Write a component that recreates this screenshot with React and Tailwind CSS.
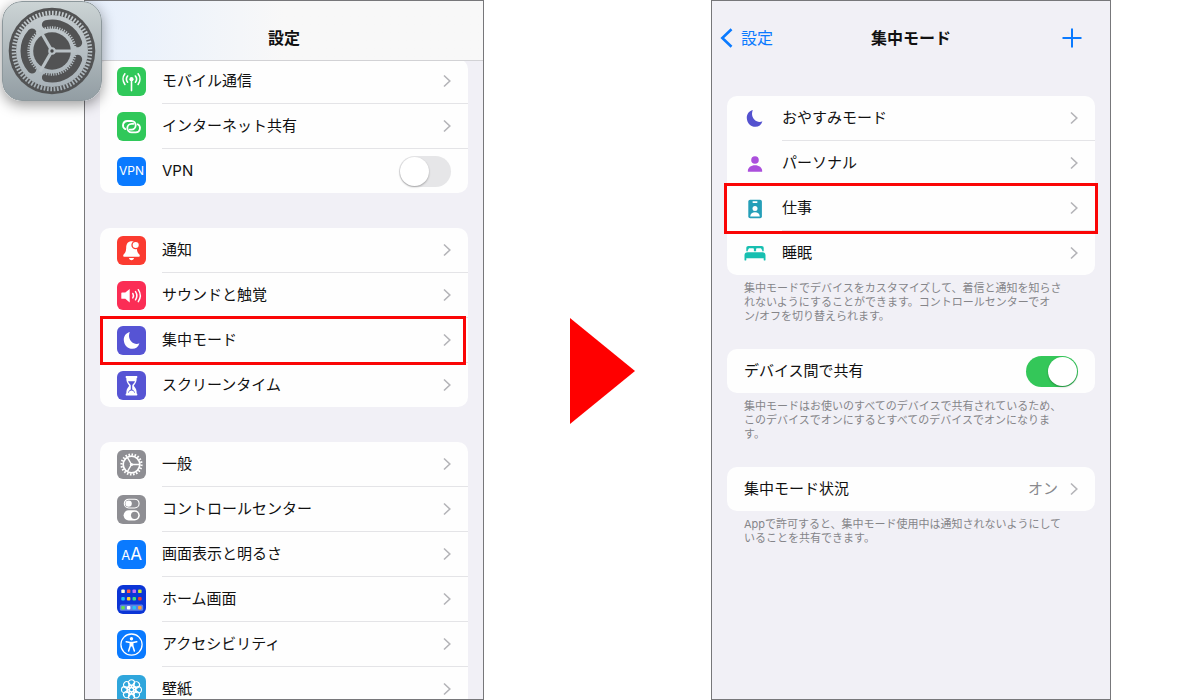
import React from "react";

const MOON =
  "M12.8 6C8.8 7 6.6 10.4 6.8 14.2C7.1 19.2 10.8 22.8 15.5 22.8C18.7 22.8 21.3 20.8 22.4 17.2C20.8 18.2 18.6 18.2 16.8 17.3C12.6 15.3 10.9 10.6 12.8 6Z";

function Chevron() {
  return (
    <svg viewBox="0 0 8 14" className="h-3.5 w-2 shrink-0" fill="none" stroke="#b4b4b8" strokeWidth="1.6" aria-hidden="true">
      <path d="M1 1.5 6.8 7 1 12.5" />
    </svg>
  );
}

function Tile({ className, children }) {
  return (
    <span className={`flex size-[29px] shrink-0 items-center justify-center self-center overflow-hidden rounded-md text-white ${className}`}>
      {children}
    </span>
  );
}

function Glyph({ children, ...rest }) {
  return (
    <svg viewBox="0 0 29 29" className="size-full" fill="none" aria-hidden="true" {...rest}>
      {children}
    </svg>
  );
}

function CellularIcon() {
  return (
    <Tile className="bg-[#30c85a]">
      <Glyph stroke="currentColor" strokeWidth="1.6" strokeLinecap="round">
        <path d="M7.9 6.8A8.6 8.6 0 0 0 7.9 17.4M10.6 9A5 5 0 0 0 10.6 15.2M18.4 9A5 5 0 0 1 18.4 15.2M21.1 6.8A8.6 8.6 0 0 1 21.1 17.4M14.5 13V23.6" />
        <circle cx="14.5" cy="12.2" r="2.1" fill="currentColor" stroke="none" />
      </Glyph>
    </Tile>
  );
}

function HotspotIcon() {
  const link = "M8.3 17.1A4.3 4.3 0 0 1 10.2 9H14.4A4.3 4.3 0 0 1 14.4 17.6H12.6";
  return (
    <Tile className="bg-[#30c85a]">
      <Glyph stroke="currentColor" strokeWidth="1.8" strokeLinecap="round">
        <path d={link} />
        <path d={link} transform="rotate(180 14.5 14.7)" />
      </Glyph>
    </Tile>
  );
}

function BellIcon() {
  return (
    <Tile className="bg-[#fb3b30]">
      <Glyph fill="currentColor">
        <path d="M14 5.2C10.6 5.6 9.3 8.4 9.2 11.4C9.1 15.4 8.4 16.4 6.8 18.2C5.8 19.4 6 20.8 7.6 20.8H21.4C23 20.8 23.2 19.4 22.2 18.2C20.6 16.4 20 15.4 19.8 11.4C19.6 8 18.2 5.5 15.4 5.2C15 5.1 14.4 5.1 14 5.2ZM12 22H17C16.8 23.4 15.8 24.2 14.5 24.2C13.2 24.2 12.2 23.4 12 22Z" />
        <circle cx="18.7" cy="9" r="3.7" stroke="#fb3b30" strokeWidth="1.3" />
      </Glyph>
    </Tile>
  );
}

function SoundIcon() {
  return (
    <Tile className="bg-[#fb2d55]">
      <Glyph stroke="currentColor" strokeWidth="1.5" strokeLinecap="round">
        <path d="M5 11.6H8.3L12.7 8V21.4L8.3 17.8H5C4.5 17.8 4.3 17.6 4.3 17.2V12.2C4.3 11.8 4.5 11.6 5 11.6Z" fill="currentColor" stroke="none" />
        <path d="M15.8 12.5Q17.2 14.7 15.8 16.9M18.5 10.6Q21.2 14.7 18.5 18.8M21.3 8.7Q25.3 14.7 21.3 20.7" />
      </Glyph>
    </Tile>
  );
}

function FocusIcon() {
  return (
    <Tile className="bg-[#5654d4]">
      <Glyph fill="currentColor">
        <path d={MOON} />
      </Glyph>
    </Tile>
  );
}

function HourglassIcon() {
  return (
    <Tile className="bg-[#5654d4]">
      <Glyph fill="currentColor">
        <path d="M9.3 5H19.7C20.6 5 20.6 7 19.7 7.1C19.7 10.6 19 12 16.8 14.8C19 17.6 19.7 19 19.7 22.5C20.6 22.6 20.6 24.6 19.7 24.6H9.3C8.4 24.6 8.4 22.6 9.3 22.5C9.3 19 10 17.6 12.2 14.8C10 12 9.3 10.6 9.3 7.1C8.4 7 8.4 5 9.3 5Z" />
        <path d="M11 10.3H18C17.3 12 16 13 15.2 14.4V18.6C16.4 19.2 17.6 20.3 18.1 22H10.9C11.4 20.3 12.6 19.2 13.8 18.6V14.4C13 13 11.7 12 11 10.3Z" fill="#5654d4" />
        <path d="M11.4 21.9C12 20.4 13.2 19.7 14.5 19.6C15.8 19.7 17 20.4 17.6 21.9Z" />
      </Glyph>
    </Tile>
  );
}

function GeneralIcon() {
  return (
    <Tile className="bg-[#8e8e93]">
      <Glyph stroke="currentColor">
        <circle cx="14.5" cy="14.5" r="10" strokeWidth="2.2" pathLength="40" strokeDasharray="1 1" />
        <circle cx="14.5" cy="14.5" r="8.3" strokeWidth="1.7" />
        <path d="M14.5 14.5H22.5M14.5 14.5L10.5 7.6M14.5 14.5L10.5 21.4" strokeWidth="1.4" />
        <circle cx="14.5" cy="14.5" r="1.6" fill="currentColor" stroke="none" />
      </Glyph>
    </Tile>
  );
}

function ControlCenterIcon() {
  return (
    <Tile className="bg-[#8e8e93]">
      <Glyph>
        <rect x="7.3" y="4.2" width="14.8" height="8.8" rx="4.4" stroke="currentColor" strokeWidth="1.1" />
        <circle cx="11.6" cy="8.6" r="3.2" fill="currentColor" />
        <rect x="6.6" y="15.2" width="16.2" height="10.2" rx="5.1" fill="currentColor" />
        <circle cx="17.6" cy="20.3" r="3.6" fill="#8e8e93" />
      </Glyph>
    </Tile>
  );
}

const HOME_DOTS = [
  ["#ffffd8", "#ff5a4a", "#c86cf5", "#c9ea2e"],
  ["#22c3f3", "#ffd02e", "#3fe07c", "#f5392f"],
  ["#62e052", "#ffffff", "#25c5f5", "#ff9f2e"],
];

function HomeIcon() {
  return (
    <Tile className="bg-[#0b35d6]">
      <Glyph>
        <rect x="2.8" y="19.4" width="23.4" height="6.4" rx="1.6" fill="#5f7fe6" />
        {HOME_DOTS.map((row, r) =>
          row.map((color, c) => (
            <rect key={color} x={4.3 + c * 5.6} y={[4.6, 12, 20.9][r]} width="3.5" height="3.5" rx="0.9" fill={color} />
          ))
        )}
      </Glyph>
    </Tile>
  );
}

function AccessibilityIcon() {
  return (
    <Tile className="bg-[#0a7aff]">
      <Glyph stroke="currentColor" strokeLinecap="round" strokeLinejoin="round">
        <circle cx="14.5" cy="14.6" r="10.6" strokeWidth="1.3" />
        <circle cx="14.5" cy="8.8" r="1.7" fill="currentColor" stroke="none" />
        <path d="M9.2 11.8L13 12.6H16L19.8 11.8M13.3 12.8L13.2 16L11.6 21M15.7 12.8L15.8 16L17.4 21" strokeWidth="1.5" />
        <path d="M13 12.4H16V16.6H13Z" fill="currentColor" stroke="none" />
      </Glyph>
    </Tile>
  );
}

function WallpaperIcon() {
  const petals = [0, 45, 90, 135, 180, 225, 270, 315];
  return (
    <Tile className="bg-[#2fa6dc]">
      <Glyph stroke="currentColor" strokeWidth="1.1">
        {petals.map((angle) => (
          <circle key={angle} cx="14.5" cy="7.8" r="3.1" transform={`rotate(${angle} 14.5 14.7)`} />
        ))}
        {petals.map((angle) => (
          <circle key={`inner-${angle}`} cx="14.5" cy="11.2" r="1.6" transform={`rotate(${angle + 22} 14.5 14.7)`} />
        ))}
        <circle cx="14.5" cy="14.7" r="2.2" />
      </Glyph>
    </Tile>
  );
}

function VpnIcon() {
  return (
    <Tile className="bg-[#0a7aff]">
      <span className="text-[12px] leading-none">VPN</span>
    </Tile>
  );
}

function DisplayIcon() {
  return (
    <Tile className="bg-[#0a7aff]">
      <span className="text-[13px] leading-none">
        A<span className="text-[17px]">A</span>
      </span>
    </Tile>
  );
}

function Bare({ children }) {
  return (
    <svg viewBox="1 0 22 24" className="h-6 w-[22px] shrink-0 self-center" aria-hidden="true">
      {children}
    </svg>
  );
}

const MoonMark = () => (
  <Bare>
    <path d={MOON} transform="translate(-3 -3)" fill="#5452cf" />
  </Bare>
);

const PersonMark = () => (
  <Bare>
    <g fill="#ab4fdc">
      <circle cx="12" cy="8" r="3.8" />
      <path d="M4.8 19.2C4.8 15.5 8 13.3 12 13.3S19.2 15.5 19.2 19.2C19.2 19.6 19 19.8 18.6 19.8H5.4C5 19.8 4.8 19.6 4.8 19.2Z" />
    </g>
  </Bare>
);

const BadgeMark = () => (
  <Bare>
    <rect x="5.3" y="2.8" width="13.6" height="18.4" rx="1.8" fill="#259fb8" />
    <rect x="9.4" y="4.3" width="5.2" height="1.6" rx="0.8" fill="#fff" />
    <circle cx="12" cy="11.6" r="2.5" fill="#fff" />
    <path d="M7.2 19.4C7.4 16.6 9.4 15.2 12 15.2S16.6 16.6 16.8 19.4Z" fill="#fff" />
  </Bare>
);

const BedMark = () => (
  <Bare>
    <g fill="#17bfb0">
      <path d="M3.3 10.2V7C3.3 5.7 4.1 5 5.4 5H18.6C19.9 5 20.7 5.7 20.7 7V10.2H19.2V9.2C19.2 8.5 18.8 8.2 18.2 8.2V7.2H14.3C13.5 7.2 13.1 7.6 13.1 8.2V10.2H10.9V8.2C10.9 7.6 10.5 7.2 9.7 7.2H5.8V8.2C5.2 8.2 4.8 8.5 4.8 9.2V10.2Z" />
      <path d="M1.5 14.4C1.5 12.2 2.6 11.2 4.6 11.2H19.4C21.4 11.2 22.5 12.2 22.5 14.4V19C22.5 19.7 20.7 19.7 20.7 19V17.3H3.3V19C3.3 19.7 1.5 19.7 1.5 19Z" />
    </g>
  </Bare>
);

function Switch({ id, defaultChecked }) {
  return (
    <input
      id={id}
      type="checkbox"
      role="switch"
      defaultChecked={defaultChecked}
      className="h-[31px] w-[52px] shrink-0 cursor-pointer appearance-none rounded-full bg-[#e6e6e8] p-px before:block before:size-[29px] before:rounded-full before:bg-white before:shadow-[0_1px_2px_rgba(0,0,0,0.3)] before:content-[''] checked:bg-[#34c759] checked:before:translate-x-[21px]"
    />
  );
}

function Card({ children, className = "" }) {
  return <ul className={`rounded-[10px] bg-[#fefefe] ${className}`}>{children}</ul>;
}

function Row({ icon, label, value, highlight, last, switchId, checked }) {
  const body = (
    <>
      {icon}
      <span className={`flex grow items-center pr-[17px] ${icon ? "ml-4" : ""} ${last ? "h-11" : "h-[45px] border-b border-[#e4e4e7]"}`}>
        <span className="grow">{label}</span>
        {value && <span className="mr-3 text-[#8a8a8e]">{value}</span>}
        {switchId ? <Switch id={switchId} defaultChecked={checked} /> : <Chevron />}
      </span>
    </>
  );
  return (
    <li className="relative">
      {switchId ? (
        <label htmlFor={switchId} className="flex pl-[17px]">
          {body}
        </label>
      ) : (
        <a href="#" className="flex pl-[17px]">
          {body}
        </a>
      )}
      {highlight && <span className={`pointer-events-none absolute z-10 border-3 border-[#fa0505] ${highlight}`} />}
    </li>
  );
}

function Note({ lines }) {
  return (
    <p className="mt-1.5 mb-[26px] pl-[17px] text-[11px] leading-[14px] whitespace-nowrap text-[#858589]">
      {lines.map((line) => (
        <span key={line} className="block">
          {line}
        </span>
      ))}
    </p>
  );
}

function Phone({ children }) {
  return <section className="flex h-screen min-w-0 flex-col overflow-hidden border border-[#77777a] bg-[#f1f0f6]">{children}</section>;
}

function SettingsAppIcon() {
  return (
    <svg viewBox="0 0 100 100" className="absolute top-px left-0.5 z-20 size-[100px] rounded-[20px] shadow-[0_4px_14px_rgba(0,0,0,0.4)]" role="img" aria-label="設定">
      <defs>
        <linearGradient id="plate" x1="0" y1="0" x2="0" y2="1">
          <stop offset="0" stopColor="#ccd4d5" />
          <stop offset="1" stopColor="#929da3" />
        </linearGradient>
        <linearGradient id="metal" gradientUnits="userSpaceOnUse" x1="0" y1="8" x2="0" y2="92">
          <stop offset="0" stopColor="#c6cdd0" />
          <stop offset="1" stopColor="#a6b0b6" />
        </linearGradient>
      </defs>
      <rect x="0.5" y="0.5" width="99" height="99" rx="19.5" fill="url(#plate)" stroke="#8d989c" />
      <circle cx="50" cy="50" r="43.3" fill="#525354" />
      <circle cx="50" cy="50" r="38" fill="none" stroke="url(#metal)" strokeWidth="4.6" pathLength="144" strokeDasharray="1 1" />
      <circle cx="50" cy="50" r="36" fill="url(#metal)" />
      {[0, 120, 240].map((angle) => (
        <path key={angle} d="M75.7 58.3A27 27 0 0 1 44.4 76.4" transform={`rotate(${angle} 50 50)`} fill="none" stroke="#525354" strokeWidth="9" strokeLinecap="round" />
      ))}
      <circle cx="50" cy="50" r="23.2" fill="none" stroke="url(#metal)" strokeWidth="3" pathLength="120" strokeDasharray="1 1" />
      <circle cx="50" cy="50" r="22" fill="url(#metal)" />
      <circle cx="50" cy="50" r="18.8" fill="#525354" />
      {[0, 120, 240].map((angle) => (
        <path key={angle} d="M50 48.4H74V51.6H50Z" transform={`rotate(${angle} 50 50)`} fill="#b9c1c5" />
      ))}
      <circle cx="50" cy="50" r="3.8" fill="#b9c1c5" />
      <circle cx="50" cy="50" r="1.7" fill="#444546" />
    </svg>
  );
}

export default function App() {
  return (
    <main className="relative grid min-h-screen grid-cols-[minmax(0,400px)_1fr_minmax(0,400px)] bg-white pr-[89px] pl-[84px] font-['Inter','Noto_Sans_CJK_JP',sans-serif] text-[15px] leading-5 text-[#111]" lang="ja">
      <SettingsAppIcon />

      <Phone>
        <header className="z-10 flex h-[60px] shrink-0 items-center justify-center border-b border-[#d2d2d5] bg-linear-to-r from-[#e6effc] to-[#f8f8f8] to-50% pt-3.5">
          <h1 className="text-base font-bold">設定</h1>
        </header>
        <div className="-mt-0.5 flex flex-col gap-[35px] px-[15px]">
          <Card>
            <Row icon={<CellularIcon />} label="モバイル通信" />
            <Row icon={<HotspotIcon />} label="インターネット共有" />
            <Row icon={<VpnIcon />} label="VPN" switchId="vpn" last />
          </Card>
          <Card>
            <Row icon={<BellIcon />} label="通知" />
            <Row icon={<SoundIcon />} label="サウンドと触覚" />
            <Row icon={<FocusIcon />} label="集中モード" highlight="-inset-y-0.5 left-0 right-0.5" />
            <Row icon={<HourglassIcon />} label="スクリーンタイム" last />
          </Card>
          <Card>
            <Row icon={<GeneralIcon />} label="一般" />
            <Row icon={<ControlCenterIcon />} label="コントロールセンター" />
            <Row icon={<DisplayIcon />} label="画面表示と明るさ" />
            <Row icon={<HomeIcon />} label="ホーム画面" />
            <Row icon={<AccessibilityIcon />} label="アクセシビリティ" />
            <Row icon={<WallpaperIcon />} label="壁紙" last />
          </Card>
        </div>
      </Phone>

      <div className="flex items-center justify-center pt-[42px] pl-2.5">
        <svg viewBox="0 0 65 106" className="h-[106px] w-[65px]" aria-hidden="true">
          <path d="M0 0 65 53 0 106Z" fill="#ff0000" />
        </svg>
      </div>

      <Phone>
        <header className="grid h-[60px] shrink-0 grid-cols-3 items-center px-2 pt-3.5 text-base">
          <a href="#" className="flex items-center gap-2 text-[#0a7aff]">
            <svg viewBox="0 0 13 20" className="h-5 w-[13px]" fill="none" stroke="currentColor" strokeWidth="2.6" aria-hidden="true">
              <path d="M11.5 1.2 2.3 10 11.5 18.8" />
            </svg>
            設定
          </a>
          <h2 className="text-center font-bold">集中モード</h2>
          <button type="button" aria-label="追加" className="mr-5 justify-self-end text-[#0a7aff]">
            <svg viewBox="0 0 20 20" className="size-5" fill="none" stroke="currentColor" strokeWidth="2" aria-hidden="true">
              <path d="M10 0.5V19.5M0.5 10H19.5" />
            </svg>
          </button>
        </header>
        <div className="mt-[35px] px-[15px]">
          <Card>
            <Row icon={<MoonMark />} label="おやすみモード" />
            <Row icon={<PersonMark />} label="パーソナル" />
            <Row icon={<BadgeMark />} label="仕事" highlight="-inset-[3px]" />
            <Row icon={<BedMark />} label="睡眠" last />
          </Card>
          <Note
            lines={[
              "集中モードでデバイスをカスタマイズして、着信と通知を知らさ",
              "れないようにすることができます。コントロールセンターでオ",
              "ン/オフを切り替えられます。",
            ]}
          />
          <Card>
            <Row label="デバイス間で共有" switchId="share" checked last />
          </Card>
          <Note
            lines={[
              "集中モードはお使いのすべてのデバイスで共有されているため、",
              "このデバイスでオンにするとすべてのデバイスでオンになりま",
              "す。",
            ]}
          />
          <Card>
            <Row label="集中モード状況" value="オン" last />
          </Card>
          <Note lines={["Appで許可すると、集中モード使用中は通知されないようにして", "いることを共有できます。"]} />
        </div>
      </Phone>
    </main>
  );
}
